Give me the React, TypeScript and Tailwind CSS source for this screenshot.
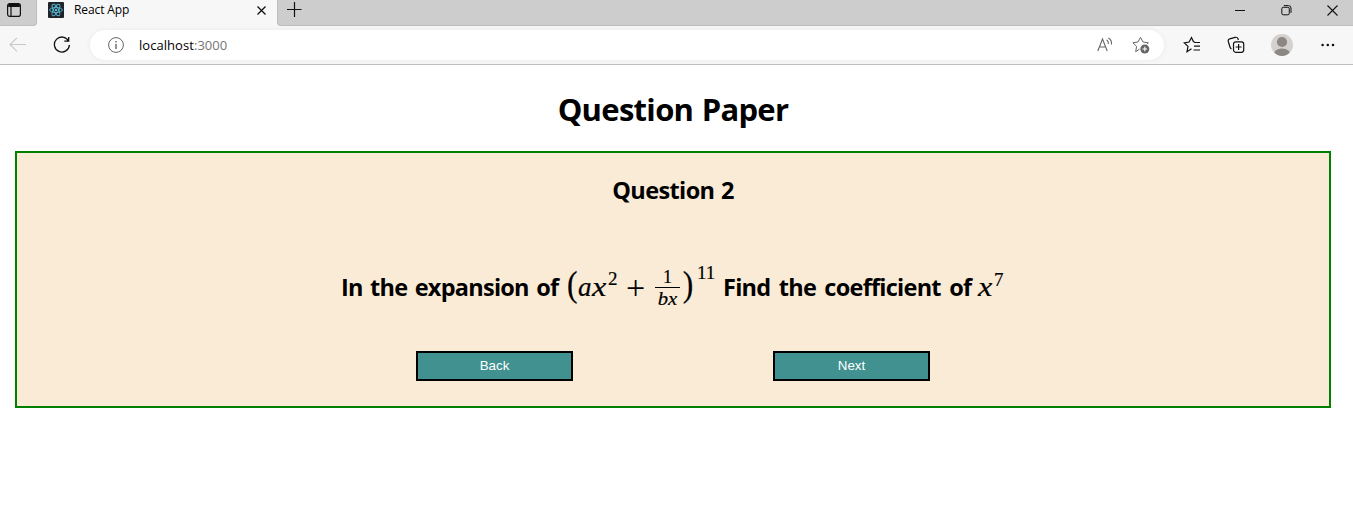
import React from "react";

const ui = "font-['Open_Sans','Noto_Sans',sans-serif]";

function ReactLogo() {
  return (
    <svg className="h-4 w-4 shrink-0" viewBox="0 0 16 16" fill="none">
      <rect width="16" height="16" rx="1" fill="#20232a" />
      <g stroke="#58b9d3" strokeWidth="0.9">
        <ellipse cx="8" cy="8" rx="6.4" ry="2.5" />
        <ellipse cx="8" cy="8" rx="6.4" ry="2.5" transform="rotate(60 8 8)" />
        <ellipse cx="8" cy="8" rx="6.4" ry="2.5" transform="rotate(120 8 8)" />
      </g>
      <circle cx="8" cy="8" r="1.3" fill="#58b9d3" />
    </svg>
  );
}

function TitleBar() {
  return (
    <div className="flex h-[26px] bg-[#f7f7f7]">
      <div className="h-[26px] w-[37px] shrink-0 rounded-br-[4px] border-r border-b border-[#bdbdbd] bg-[#cdcdcd]">
        <svg className="mt-[2px] ml-[6px] h-4 w-4" viewBox="0 0 16 16" fill="none" stroke="#111" strokeWidth="1.2">
          <rect x="1.6" y="1.6" width="12.8" height="12.8" rx="2.2" />
          <path d="M2 4h12M5 5v9" />
          <path d="M3 2.5h10v2H3z" fill="#111" />
        </svg>
      </div>
      <div className="flex h-[26px] w-[240px] shrink-0 pl-[11px]">
        <div className="pt-[2px]"><ReactLogo /></div>
        <span className="ml-[10px] h-5 w-[100px] text-[12px] leading-5 tracking-[-0.1px] whitespace-nowrap text-black">React App</span>
        <svg className="mt-[6px] ml-[83px] h-[9px] w-[9px]" viewBox="0 0 9 9" stroke="#111" strokeWidth="1.3">
          <path d="M.5.5l8 8M8.5.5l-8 8" />
        </svg>
      </div>
      <div className="flex h-[26px] grow rounded-bl-[4px] border-b border-l border-[#bdbdbd] bg-[#cdcdcd]">
        <svg className="mt-[2px] ml-[9px] h-[15px] w-[15px]" viewBox="0 0 15 15" stroke="#111" strokeWidth="1.2">
          <path d="M0 7.5h14.5M7.5 0v15" />
        </svg>
        <svg className="mt-[5px] ml-auto h-[11px] w-[10px]" viewBox="0 0 10 11" stroke="#111">
          <path d="M0 5.5h10" />
        </svg>
        <svg className="mt-[5px] ml-9 h-[11px] w-[11px]" viewBox="0 0 11 11" fill="none" stroke="#111">
          <rect x=".8" y="2.3" width="7.5" height="7.5" rx="1.5" />
          <path d="M2.8.6H7.5Q10 .6 10 3V7.8" />
        </svg>
        <svg className="mt-[5px] mr-[15px] ml-[35px] h-[11px] w-[11px]" viewBox="0 0 11 11" stroke="#111" strokeWidth="1.1">
          <path d="M.5.5l10 10M10.5.5l-10 10" />
        </svg>
      </div>
    </div>
  );
}

function AddressBar() {
  return (
    <div className="flex h-[39px] items-start border-b border-[#bdbdbd] bg-[#f7f7f7] pt-1">
      <svg className="mt-[7px] ml-[9px] h-4 w-[18px]" viewBox="0 0 18 16" fill="none" stroke="#c9c9c9" strokeWidth="1.1">
        <path d="M17 7.5H1M8 .8L1 7.5l7 6.8" />
      </svg>
      <svg className="mt-[6px] ml-[26px] h-[18px] w-[18px]" viewBox="0 0 18 18" fill="none" stroke="#111" strokeWidth="1.3">
        <path d="M15.6 5.1A7.5 7.5 0 1 0 16.4 9M15.7.9V5.2H11.3" />
      </svg>
      <div className="ml-[19px] flex h-[30px] w-[1074px] shrink-0 rounded-full bg-white shadow-[0_0_4px_#e8e8e8]">
        <svg className="mt-[7px] ml-[18px] h-4 w-4" viewBox="0 0 16 16" fill="none" stroke="#666" strokeWidth="1">
          <circle cx="8" cy="8" r="7.4" />
          <path d="M8 7v5M8 4v1.5" strokeWidth="1.4" />
        </svg>
        <span className="ml-[15px] text-[13px] leading-[30px] tracking-[0.05px] text-black">
          localhost<span className="text-[#757575]">:3000</span>
        </span>
        <svg className="mt-[7px] mr-[19px] ml-auto h-4 w-4" viewBox="0 0 16 16" fill="none" stroke="#666" strokeWidth="1.1">
          <path d="M.8 14L5.5 2l4.7 12M2.3 10h6.4" />
          <path d="M9.6 2.8Q11.6 4.2 11.4 7M11.4 1Q15 3 14.4 7.5" />
        </svg>
        <svg className="mt-[6px] mr-[14px] h-[18px] w-[18px]" viewBox="0 0 18 18" fill="none" stroke="#666" strokeWidth="1">
          <path d="M7.5 13.2L3.7 15.7 4.6 10.4.9 6.8 5.9 6 8.5 1.4 11 6l5.3.8-1.4 1.5" />
          <circle cx="12.8" cy="13" r="4.5" fill="#666" stroke="none" />
          <path d="M10.5 13h4.6M12.8 10.7v4.6" stroke="#fff" strokeWidth="1.1" />
        </svg>
      </div>
      <svg className="mt-[6px] ml-[19px] h-[18px] w-[18px]" viewBox="0 0 18 18" fill="none" stroke="#111" strokeWidth="1.2">
        <path d="M8.5 12.7L4 15.7 5 10.4 1.2 6.8 6.1 6 8.5 1.5 10.4 5.5 12 6.5H17M11 10.2h6M10.5 14h6.5" />
      </svg>
      <svg className="mt-[6px] ml-[26px] h-[18px] w-[18px]" viewBox="0 0 18 18" fill="none" stroke="#111" strokeWidth="1.2">
        <rect x="6.5" y="5.8" width="10.2" height="10.5" rx="2.2" />
        <path d="M11.6 8v6M8.6 11h6M4.5 12.8Q3.4 12.6 2.8 10.5L1.3 5.5Q.8 3.4 2.8 2.8L8 1.4Q10.2.8 11 2.8L11.4 4" />
      </svg>
      <svg className="mt-[4px] ml-[26px] h-[22px] w-[22px]" viewBox="0 0 22 22">
        <circle cx="11" cy="11" r="11" fill="#d4d1ce" />
        <circle cx="11" cy="8" r="5.1" fill="#8b8783" />
        <path d="M3.3 18.2Q5.7 14.6 11 14.6T18.7 18.2Q15.5 22 11 22T3.3 18.2" fill="#8b8783" />
      </svg>
      <svg className="mt-[13px] ml-[28px] h-1 w-[14px]" viewBox="0 0 14 4" fill="#111">
        <circle cx="1.6" cy="2" r="1.3" /><circle cx="6.8" cy="2" r="1.3" /><circle cx="12" cy="2" r="1.3" />
      </svg>
    </div>
  );
}

const math = "font-['Liberation_Serif',serif] font-normal [-webkit-text-stroke:0.2px_black]";

function Expression() {
  return (
    <span className={`ml-[8px] flex h-[60px] w-[150px] shrink-0 items-start whitespace-nowrap ${math}`}>
      <span className="w-[11px] origin-left scale-x-90 pt-[8px] text-[35px] leading-[40px]">(</span>
      <span className="w-[14px] pt-[15px] text-[27px] leading-[30px] italic">a</span>
      <span className="w-[16px] origin-left scale-x-120 pt-[15px] text-[27px] leading-[30px] italic">x</span>
      <span className="w-[18px] pt-[11px] text-[19px] leading-[22px]">2</span>
      <span className="w-[29px] pt-[16px] text-[34px] leading-[30px] [-webkit-text-stroke:0]">+</span>
      <span className="flex w-[25px] flex-col items-center pt-[10px] text-[18px]">
        <span className="h-[20px] leading-[20px]">1</span>
        <span className="h-px w-full bg-black" />
        <span className="h-[20px] scale-x-115 pt-px leading-[20px] italic">bx</span>
      </span>
      <span className="w-[17px] origin-left scale-x-90 pt-[8px] pl-[3px] text-[35px] leading-[40px]">)</span>
      <span className="pt-[5px] text-[19px] leading-[22px]">11</span>
    </span>
  );
}

function ActionButton({ label }: { label: string }) {
  return (
    <button className="h-[30px] w-[157px] border-2 border-black bg-[#409190] pb-px font-['Liberation_Sans',sans-serif] text-[13.333px] leading-none text-white">
      {label}
    </button>
  );
}

export default function App() {
  return (
    <div className={`h-[511px] w-[1353px] overflow-hidden bg-white text-black ${ui}`}>
      <TitleBar />
      <AddressBar />
      <main className="w-[1346px] px-[15px]">
        <h1 className="h-[86px] pt-[23px] text-center text-[31px] leading-[43px] font-bold tracking-[-0.7px] [word-spacing:1px]">Question Paper</h1>
        <section className="h-[257px] border-2 border-[#008000] bg-[#faebd7]">
          <h2 className="h-[104px] pt-[21px] text-center text-[23.5px] leading-8 font-bold tracking-[-0.6px] [word-spacing:1px]">Question 2</h2>
          <div className="flex h-[60px] pl-[324px] text-[23.5px] leading-8 font-bold whitespace-nowrap">
            <span className="w-[218px] shrink-0 pt-[14px] tracking-[-0.75px] [word-spacing:2px]">In the expansion of</span>
            <Expression />
            <span className="ml-[6px] w-[255px] shrink-0 pt-[14px] tracking-[-0.75px] [word-spacing:3px]">Find the coefficient of</span>
            <span className={`w-[16px] origin-left scale-x-120 pt-[15px] text-[27px] leading-[30px] italic ${math}`}>x</span>
            <span className={`pt-[12px] text-[19px] leading-[22px] ${math}`}>7</span>
          </div>
          <div className="flex gap-[200px] pt-[34px] pl-[399px]">
            <ActionButton label="Back" />
            <ActionButton label="Next" />
          </div>
        </section>
      </main>
    </div>
  );
}
